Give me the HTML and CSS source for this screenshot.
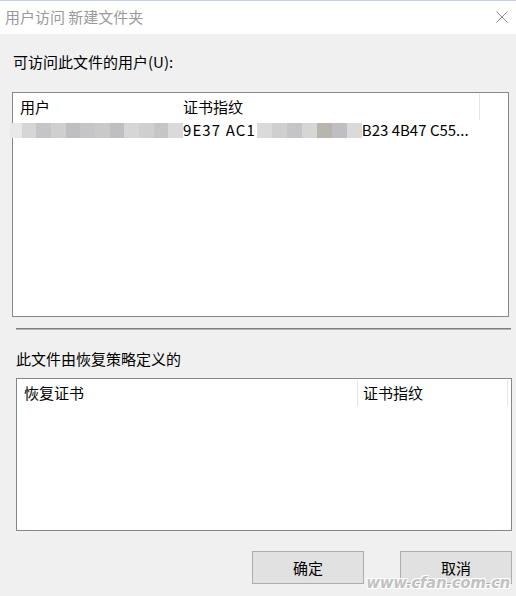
FILE: index.html
```html
<!DOCTYPE html>
<html lang="zh-CN">
<head>
<meta charset="UTF-8">
<title>用户访问 新建文件夹</title>
<link rel="stylesheet" href="styles.css">
</head>
<body>
<div class="window">
  <div class="titlebar">
    <span class="title">用户访问 新建文件夹</span>
    <svg class="close" width="12" height="12" viewBox="0 0 12 12">
      <path d="M0.5 0.5 L11.5 11.5 M11.5 0.5 L0.5 11.5" stroke="#8a8a8a" stroke-width="1" fill="none"/>
    </svg>
  </div>

  <div class="content">
    <p class="label label-top">可访问此文件的用户(U):</p>

    <div class="listbox users">
      <div class="list-head">
        <span class="cell u-name">用户</span>
        <span class="cell u-thumb">证书指纹</span>
      </div>
      <div class="list-row">
        <span class="cell u-name blur-cell">
          <i class="px p6"></i><i class="px p1"></i><i class="px p2"></i><i class="px p3"></i><i class="px p4"></i><i class="px p2"></i><i class="px p5"></i><i class="px p4"></i><i class="px p1"></i><i class="px p3"></i><i class="px p2"></i><i class="px p6"></i>
        </span>
        <span class="cell u-thumb thumb-text"><span class="thumb-head">9E37 AC1</span><span class="blur-run"><i class="px p6"></i><i class="px p3"></i><i class="px p2"></i><i class="px p1"></i><i class="px p7"></i><i class="px p4"></i><i class="px p6"></i></span>B23 4B47 C55...</span>
      </div>
    </div>

    <div class="divider"></div>

    <p class="label label-recovery">此文件由恢复策略定义的</p>

    <div class="listbox recovery">
      <div class="list-head">
        <span class="cell r-cert">恢复证书</span>
        <span class="cell r-thumb">证书指纹</span>
      </div>
    </div>

    <div class="buttons">
      <button class="btn">确定</button>
      <button class="btn">取消</button>
    </div>
  </div>

  <div class="watermark">www.cfan.com.cn</div>
</div>
</body>
</html>
```

FILE: styles.css
```css
body {
  margin: 0;
  font-family: "Noto Sans CJK SC", "Noto Sans", sans-serif;
  font-size: 15px;
  color: #000;
  background: #f0f0f0;
}

.window {
  position: relative;
  width: 516px;
  height: 596px;
  overflow: hidden;
  background: #f0f0f0;
}

.titlebar {
  height: 33px;
  border-top: 1px solid #c6cfdf;
  background: #fff;
  display: flex;
  align-items: center;
  justify-content: space-between;
  padding: 0 8px 0 5px;
}

.title {
  color: #9a9a9a;
  line-height: 20px;
  margin-top: -2px;
}

.close { margin-top: -2px; }

.content {
  padding: 0 4px 0 12px;
}

.label {
  margin: 0;
  line-height: 20px;
}

.label-top {
  padding-top: 18px;
  padding-left: 1px;
  margin-bottom: 20px;
}

.listbox {
  background: #fff;
  border: 1px solid #828790;
}

.users {
  width: 495px;
  height: 223px;
}

.list-head, .list-row {
  display: flex;
  line-height: 20px;
}

.list-head { height: 27px; }
.list-row { height: 20px; }

.cell {
  display: block;
  white-space: nowrap;
}

.list-head .cell {
  padding-top: 3px;
  box-sizing: border-box;
  margin-top: 1px;
  height: 26px;
}

.u-name {
  width: 170px;
  padding-left: 7px;
  box-sizing: border-box;
}

.u-thumb {
  width: 297px;
  box-sizing: border-box;
}

.list-head .u-thumb { border-right: 1px solid #e5e5e5; }

.blur-cell {
  display: flex;
  align-items: center;
}

.px {
  display: inline-block;
  width: 15px;
  height: 15px;
}

.blur-cell .px:first-child {
  margin-left: -10px;
  width: 12px;
  background: #e8e8e8;
}

.p1 { background: #d6d6d6; }
.p2 { background: #c5c5c7; }
.p3 { background: #cfcfcf; }
.p4 { background: #bfbfc1; }
.p5 { background: #c9c9ca; }
.p6 { background: #dadada; }
.p7 { background: #b8b4b0; }

.thumb-text {
  display: flex;
  align-items: center;
}

.thumb-head { letter-spacing: 1.1px; }

.blur-run {
  display: flex;
  margin-left: 1px;
}

.divider {
  margin: 11px 0 0 4px;
  width: 495px;
  height: 0;
  border-top: 1px solid #7f7f7f;
  border-bottom: 1px solid #b4b4b4;
}

.label-recovery {
  padding-top: 19px;
  padding-left: 4px;
  margin-bottom: 9px;
}

.recovery {
  margin-left: 4px;
  width: 494px;
  height: 151px;
}

.r-cert {
  width: 341px;
  padding-left: 7px;
  box-sizing: border-box;
  border-right: 1px solid #e5e5e5;
}

.r-thumb {
  width: 150px;
  padding-left: 5px;
  box-sizing: border-box;
  border-right: 1px solid #e5e5e5;
}

.buttons {
  display: flex;
  justify-content: flex-end;
  gap: 36px;
  margin-top: 20px;
}

.btn {
  width: 112px;
  height: 33px;
  background: #e1e1e1;
  border: 1px solid #adadad;
  font-family: inherit;
  font-size: 15px;
  color: #000;
  padding: 0;
}

.watermark {
  position: absolute;
  right: 6px;
  bottom: 4px;
  font-family: "DejaVu Sans", sans-serif;
  font-weight: bold;
  font-style: italic;
  font-size: 15px;
  letter-spacing: -0.3px;
  color: #c2c2c2;
  text-shadow: 1px 1px 0 #fff, -1px -1px 0 #fff, 1px -1px 0 #fff, -1px 1px 0 #fff;
}
```
